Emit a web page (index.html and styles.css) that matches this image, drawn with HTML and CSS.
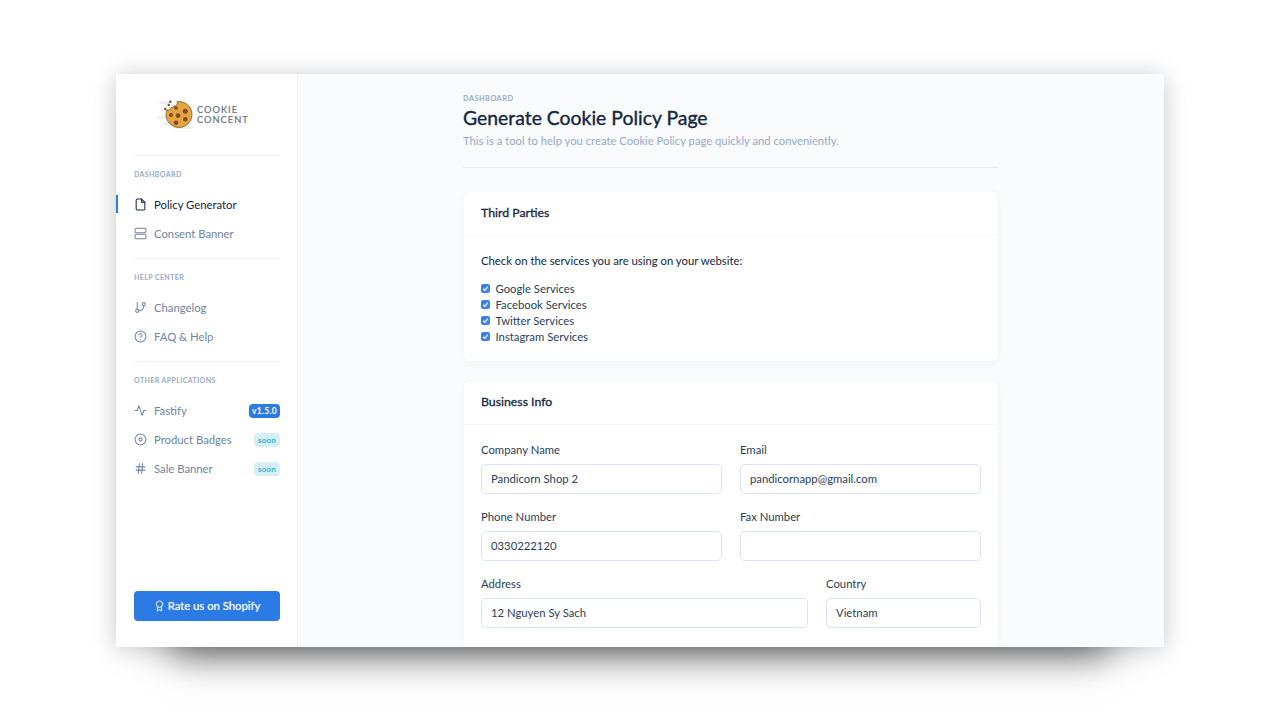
FILE: index.html
```html
<!DOCTYPE html>
<html lang="en">
<head>
<meta charset="utf-8">
<title>Generate Cookie Policy Page</title>
<link rel="stylesheet" href="styles.css">
</head>
<body>
<div class="window">
  <aside class="sidebar">
    <div class="logo">
      <svg class="logo-mark" width="38" height="32" viewBox="0 0 38 32">
        <g fill="#eceef0">
          <rect x="2" y="2" width="12" height="3" rx="1.5"/>
          <rect x="1" y="17" width="8" height="3" rx="1.5"/>
          <rect x="3" y="9" width="6" height="3" rx="1.5"/>
          <rect x="17" y="27" width="19" height="3" rx="1.5"/>
          <rect x="6" y="23" width="8" height="3" rx="1.5"/>
        </g>
        <path d="M20 2.650A13 13 0 1 1 9.900 10.750A3 3 0 0 0 14 8.500A3 3 0 0 0 17 7A3 3 0 0 0 20 2.650z" fill="#e8a33d" stroke="#5d4a2c" stroke-width=".7"/>
        <g fill="#7a4a2a">
          <circle cx="19" cy="9" r="1.800"/><circle cx="28.300" cy="12.300" r="2.500"/><circle cx="14" cy="16" r="2"/>
          <circle cx="21" cy="16.600" r="2.300"/><circle cx="28.300" cy="20.300" r="2.300"/><circle cx="19" cy="23.700" r="2.300"/>
          <circle cx="13.300" cy="2.700" r="1.200"/><circle cx="11.700" cy="6" r="1.200"/><circle cx="8.300" cy="10" r="1.200"/>
        </g>
      </svg>
      <div class="logo-text">COOKIE<br>CONCENT</div>
    </div>

    <section class="nav-section">
      <h6 class="nav-label">DASHBOARD</h6>
      <a class="nav-item active">
        <svg class="ico" viewBox="0 0 24 24"><path d="M14 2H6a2 2 0 0 0-2 2v16a2 2 0 0 0 2 2h12a2 2 0 0 0 2-2V8z"/><path d="M14 2v6h6"/></svg>
        <span>Policy Generator</span>
      </a>
      <a class="nav-item">
        <svg class="ico" viewBox="0 0 24 24"><rect x="2" y="2.500" width="20" height="8" rx="2"/><rect x="2" y="13.500" width="20" height="8" rx="2"/></svg>
        <span>Consent Banner</span>
      </a>
    </section>

    <section class="nav-section">
      <h6 class="nav-label">HELP CENTER</h6>
      <a class="nav-item">
        <svg class="ico" viewBox="0 0 24 24"><path d="M6 3v12"/><circle cx="18" cy="6" r="3"/><circle cx="6" cy="18" r="3"/><path d="M18 9a9 9 0 0 1-9 9"/></svg>
        <span>Changelog</span>
      </a>
      <a class="nav-item">
        <svg class="ico" viewBox="0 0 24 24"><circle cx="12" cy="12" r="10"/><path d="M9.100 9a3 3 0 0 1 5.800 1c0 2-3 3-3 3"/><path d="M12 17h.01"/></svg>
        <span>FAQ &amp; Help</span>
      </a>
    </section>

    <section class="nav-section">
      <h6 class="nav-label">OTHER APPLICATIONS</h6>
      <a class="nav-item">
        <svg class="ico" viewBox="0 0 24 24"><path d="M22 12h-4l-3 9L9 3l-3 9H2"/></svg>
        <span>Fastify</span>
        <b class="badge badge-blue">v1.5.0</b>
      </a>
      <a class="nav-item">
        <svg class="ico" viewBox="0 0 24 24"><circle cx="12" cy="12" r="10"/><circle cx="12" cy="12" r="3"/></svg>
        <span>Product Badges</span>
        <b class="badge badge-soon">soon</b>
      </a>
      <a class="nav-item">
        <svg class="ico" viewBox="0 0 24 24"><path d="M4 9h16M4 15h16M10 3 8 21M16 3l-2 18"/></svg>
        <span>Sale Banner</span>
        <b class="badge badge-soon">soon</b>
      </a>
    </section>

    <button class="rate-btn" type="button">
      <svg class="award" viewBox="0 0 24 24"><circle cx="12" cy="8" r="7"/><path d="M8.200 13.900 7 23l5-3 5 3-1.200-9.100"/></svg>
      Rate us on Shopify
    </button>
  </aside>

  <main class="main">
    <div class="content">
      <header class="page-head">
        <div class="crumb">DASHBOARD</div>
        <h1>Generate Cookie Policy Page</h1>
        <p>This is a tool to help you create Cookie Policy page quickly and conveniently.</p>
      </header>

      <section class="card">
        <h2 class="card-head">Third Parties</h2>
        <div class="card-body tp-body">
          <p class="lead">Check on the services you are using on your website:</p>
          <div class="checks">
            <label class="check"><i class="box"><svg viewBox="0 0 10 10"><path d="M2.500 5.200 4.300 7l3.200-3.800"/></svg></i>Google Services</label>
            <label class="check"><i class="box"><svg viewBox="0 0 10 10"><path d="M2.500 5.200 4.300 7l3.200-3.800"/></svg></i>Facebook Services</label>
            <label class="check"><i class="box"><svg viewBox="0 0 10 10"><path d="M2.500 5.200 4.300 7l3.200-3.800"/></svg></i>Twitter Services</label>
            <label class="check"><i class="box"><svg viewBox="0 0 10 10"><path d="M2.500 5.200 4.300 7l3.200-3.800"/></svg></i>Instagram Services</label>
          </div>
        </div>
      </section>

      <section class="card">
        <h2 class="card-head">Business Info</h2>
        <div class="card-body form">
          <div class="row">
            <div class="field"><div class="flabel">Company Name</div><div class="input">Pandicorn Shop 2</div></div>
            <div class="field"><div class="flabel">Email</div><div class="input">pandicornapp@gmail.com</div></div>
          </div>
          <div class="row">
            <div class="field"><div class="flabel">Phone Number</div><div class="input">0330222120</div></div>
            <div class="field"><div class="flabel">Fax Number</div><div class="input"></div></div>
          </div>
          <div class="row row-address">
            <div class="field"><div class="flabel">Address</div><div class="input">12 Nguyen Sy Sach</div></div>
            <div class="field"><div class="flabel">Country</div><div class="input">Vietnam</div></div>
          </div>
        </div>
      </section>
    </div>
  </main>
</div>
</body>
</html>
```
FILE: styles.css
```css
* { box-sizing: border-box; }
html, body { height: 100%; }
body {
  margin: 0;
  padding: 74px 116px 73px;
  background: #fff;
  font-family: "Lato", "Liberation Sans", sans-serif;
  overflow: hidden;
}
.window {
  height: 573px;
  display: flex;
  overflow: hidden;
  background: #f9fbfd;
  box-shadow: 0 64px 36px -55px rgba(0,0,0,.56), 0 10px 30px rgba(0,0,0,.07), 0 0 22px rgba(0,0,0,.16);
}
.sidebar {
  width: 182px;
  flex: none;
  display: flex;
  flex-direction: column;
  padding: 0 17px 26px 18px;
  background: #fff;
  border-right: 1px solid #edf2f9;
}
.logo {
  height: 82px;
  display: flex;
  align-items: center;
  gap: 2px;
  padding-left: 23px;
  border-bottom: 1px solid #edf2f9;
}
.logo-mark { flex: none; }
.logo-text {
  font-size: 9.300px;
  line-height: 10px;
  padding-top: 1px;
  letter-spacing: 1px;
  color: #5e6b7c;
  -webkit-text-stroke: .15px #5e6b7c;
}
.nav-section { border-bottom: 1px solid #edf2f9; padding: 13px 0 10px; }
.nav-section:nth-of-type(3) { border-bottom: 0; }
.nav-label {
  margin: 0 0 10px;
  height: 11px;
  line-height: 11px;
  font-size: 7px;
  font-weight: 700;
  letter-spacing: .4px;
  color: #95aac9;
}
.nav-item {
  position: relative;
  height: 29px;
  display: flex;
  align-items: center;
  gap: 7px;
  font-size: 11.300px;
  color: #6e84a3;
}
.nav-item.active { color: #12263f; }
.nav-item.active::before {
  content: "";
  position: absolute;
  left: -18px;
  top: 5px;
  width: 2px;
  height: 18px;
  background: #2c7be5;
}
.ico {
  width: 13px;
  height: 13px;
  flex: none;
  fill: none;
  stroke: #6e84a3;
  stroke-width: 1.900;
  stroke-linecap: round;
  stroke-linejoin: round;
}
.active .ico { stroke: #12263f; }
.badge {
  margin-left: auto;
  padding: 0 3px;
  height: 14px;
  line-height: 14px;
  border-radius: 4px;
  font-size: 8.500px;
  font-weight: 700;
  letter-spacing: .3px;
}
.badge-blue { background: #2c7be5; color: #fff; }
.badge-soon { padding: 0 4px; background: #d5eff6; color: #39afd1; font-size: 8px; letter-spacing: .2px; }
.rate-btn {
  margin-top: auto;
  height: 30px;
  padding: 0 0 1px;
  display: flex;
  align-items: center;
  justify-content: center;
  gap: 3px;
  border: 0;
  border-radius: 4px;
  background: #2c7be5;
  color: #fff;
  font: 400 11.300px "Lato", "Liberation Sans", sans-serif;
  -webkit-text-stroke: .2px #fff;
}
.award { width: 11px; height: 12px; fill: none; stroke: #fff; stroke-width: 2; stroke-linecap: round; stroke-linejoin: round; }
.main { flex: 1; min-width: 0; padding: 0 0 0 165px; overflow: hidden; }
.content { width: 536px; }
.page-head { padding-top: 20px; height: 94px; border-bottom: 1px solid #e3ebf6; }
.crumb { height: 10px; line-height: 10px; font-size: 7.300px; font-weight: 700; letter-spacing: .5px; color: #95aac9; }
h1 { margin: 2px 0 0; font-size: 19.400px; line-height: 24px; font-weight: 400; color: #12263f; -webkit-text-stroke: .35px #12263f; }
.page-head p { margin: 4px 0 0; font-size: 11.260px; line-height: 14px; color: #95aac9; }
.card {
  margin-top: 18px;
  background: #fff;
  border: 1px solid #f3f6fb;
  border-radius: 6px;
  box-shadow: 0 3px 10px rgba(18,38,63,.03);
}
.page-head + .card { margin-top: 23px; }
.card-head {
  margin: 0;
  height: 44px;
  padding: 0 17px 3px;
  display: flex;
  align-items: center;
  border-bottom: 1px solid #f3f6fb;
  font-size: 12.300px;
  font-weight: 400;
  color: #12263f;
  -webkit-text-stroke: .3px #12263f;
}
.tp-body { padding: 18px 17px 17px; }
.lead { margin: 0 0 12px; font-size: 11.300px; line-height: 14px; color: #12263f; }
.checks { display: flex; flex-direction: column; }
.check { height: 16px; display: flex; align-items: center; gap: 5.500px; font-size: 11.300px; color: #283e59; }
.box { width: 9px; height: 9px; border-radius: 2px; background: #3b82ec; display: flex; }
.box svg { width: 9px; height: 9px; fill: none; stroke: #fff; stroke-width: 1.400; }
.form { padding: 18px 17px 24px; display: flex; flex-direction: column; gap: 16px; }
.row { display: grid; grid-template-columns: 1fr 1fr; column-gap: 18px; }
.row-address { grid-template-columns: 1fr 155px; }
.flabel { height: 14px; line-height: 14px; font-size: 11.300px; color: #283e59; margin-bottom: 7px; }
.input {
  height: 30px;
  line-height: 28px;
  padding: 0 9px;
  border: 1px solid #d9e4f5;
  border-radius: 5px;
  background: #fff;
  font-size: 11.300px;
  color: #283e59;
}
```
